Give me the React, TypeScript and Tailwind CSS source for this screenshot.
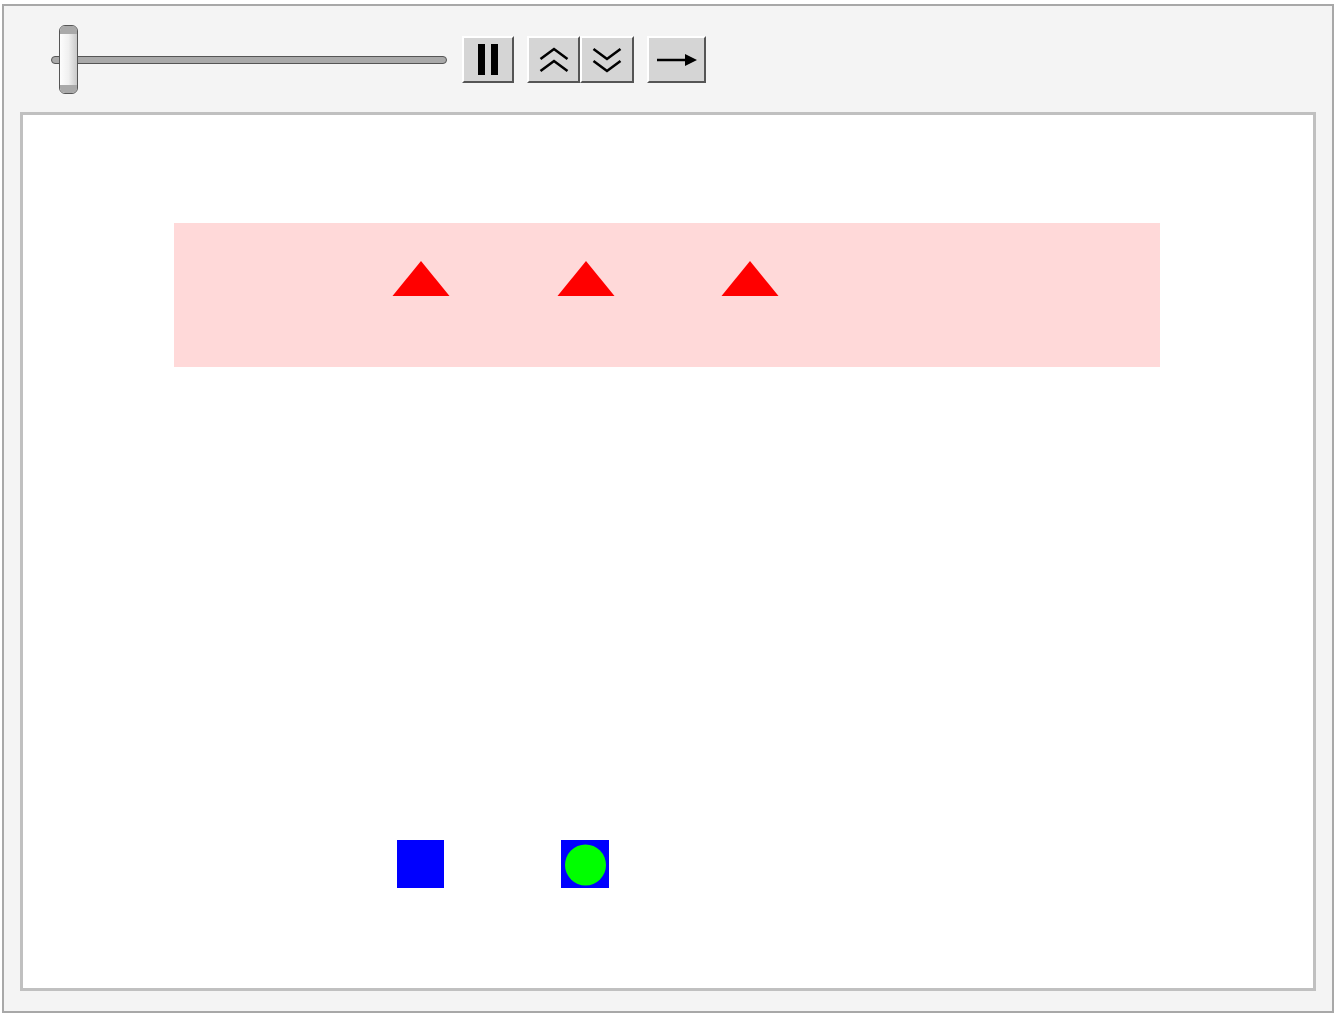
import React from "react";

function ToolButton({ children, className }: { children: React.ReactNode; className?: string }) {
  return (
    <button
      className={
        "h-[47px] flex items-center justify-center bg-[#d5d5d5] border-2 border-t-white border-l-white border-b-[#555] border-r-[#555] " +
        (className ?? "")
      }
    >
      {children}
    </button>
  );
}

function Slider() {
  return (
    <div className="relative w-[396px] h-[70px] flex items-center">
      <div className="w-full h-[8px] rounded-full bg-[#a9a9a9] border border-[#555]" />
      <div className="absolute left-[8px] top-0 w-[19px] h-[69px] rounded-[6px] border border-[#555] overflow-hidden flex flex-col bg-gradient-to-r from-[#fdfdfd] via-[#f0f0f0] to-[#c9c9c9]">
        <div className="h-[8px] bg-[#a9a9a9]" />
        <div className="flex-1" />
        <div className="h-[8px] bg-[#a9a9a9]" />
      </div>
    </div>
  );
}

export default function App() {
  return (
    <div className="w-[1336px] h-[1016px] bg-white pt-[4px] px-[2px]">
      <div className="border-2 border-[#a8a8a8] bg-[#f4f4f4] flex flex-col">
        {/* toolbar */}
        <div className="h-[106px] flex items-center pl-[47px] pt-[1px]">
          <Slider />
          <ToolButton className="ml-[15px] w-[52px]">
            <svg width="22" height="31" viewBox="0 0 22 31">
              <rect x="1" y="0" width="7" height="31" fill="#000" />
              <rect x="14" y="0" width="7" height="31" fill="#000" />
            </svg>
          </ToolButton>
          <div className="flex ml-[13px]">
            <ToolButton className="w-[53px]">
              <svg width="30" height="26" viewBox="0 0 30 26" fill="none" stroke="#000" strokeWidth="2.6">
                <path d="M1.5 12 L15 2 L28.5 12" />
                <path d="M1.5 24 L15 14 L28.5 24" />
              </svg>
            </ToolButton>
            <ToolButton className="w-[54px]">
              <svg width="30" height="26" viewBox="0 0 30 26" fill="none" stroke="#000" strokeWidth="2.6">
                <path d="M1.5 2 L15 12 L28.5 2" />
                <path d="M1.5 14 L15 24 L28.5 14" />
              </svg>
            </ToolButton>
          </div>
          <ToolButton className="ml-[13px] w-[59px]">
            <svg width="42" height="14" viewBox="0 0 42 14">
              <line x1="1" y1="7" x2="32" y2="7" stroke="#000" strokeWidth="2.5" />
              <path d="M29 1 L41 7 L29 13 Z" fill="#000" />
            </svg>
          </ToolButton>
        </div>
        {/* canvas */}
        <div className="mx-4 mb-5 h-[879px] border-[3px] border-[#c0c0c0] bg-white">
          <svg width="1290" height="873" viewBox="0 0 1290 873" className="block">
            <rect x="151" y="108" width="986" height="144" fill="#ffd9d9" />
            <polygon points="369.5,181 398,146 426.5,181" fill="#ff0000" />
            <polygon points="534.5,181 563,146 591.5,181" fill="#ff0000" />
            <polygon points="698.5,181 727,146 755.5,181" fill="#ff0000" />
            <rect x="374" y="725" width="47" height="48" fill="#0000ff" />
            <rect x="538" y="725" width="48" height="48" fill="#0000ff" />
            <circle cx="562.5" cy="750" r="20.5" fill="#00ff00" />
          </svg>
        </div>
      </div>
    </div>
  );
}
